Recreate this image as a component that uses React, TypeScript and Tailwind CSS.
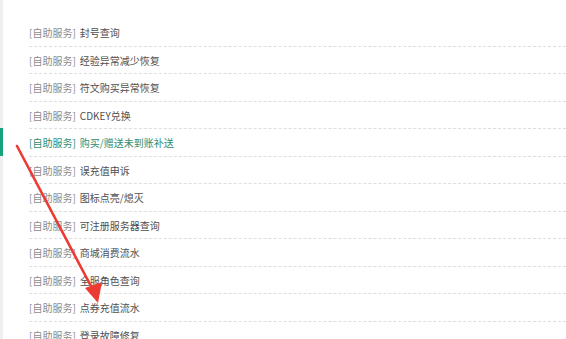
const items = [
  { title: "封号查询" },
  { title: "经验异常减少恢复" },
  { title: "符文购买异常恢复" },
  { title: "CDKEY兑换" },
  { title: "购买/赠送未到账补送", active: true },
  { title: "误充值申诉" },
  { title: "图标点亮/熄灭" },
  { title: "可注册服务器查询" },
  { title: "商城消费流水" },
  { title: "全服角色查询" },
  { title: "点券充值流水" },
  { title: "登录故障修复" },
]

const Row = ({ title, active }: { title: string; active?: boolean }) => (
  <li className="relative h-[27.5px] pt-[2px] border-b border-dashed border-[#dedede] flex items-center">
    {active && <span className="absolute -left-[29px] top-[-1px] h-[28px] w-[3px] bg-[#16a37c]" />}
    <span className={active ? "text-[#2f8d70]" : "text-[#8c8c8c]"}>[自助服务]</span>
    <span className={`ml-[4px] ${active ? "text-[#2f8d70]" : "text-[#505050]"}`}>{title}</span>
  </li>
)

export default function App() {
  return (
    <div
      className="relative w-[566px] h-[339px] overflow-hidden bg-white"
      style={{ fontFamily: '"Noto Sans CJK SC", "Noto Sans", sans-serif' }}
    >
      <div className="flex h-full">
        <div className="w-[3px] shrink-0 bg-[#efefef]" />
        <ul className="flex-1 ml-[26px] pt-[19px] text-[10px] leading-none">
          {items.map((it) => (
            <Row key={it.title} title={it.title} active={it.active} />
          ))}
        </ul>
      </div>

      {/* annotation arrow */}
      <svg className="absolute left-0 top-0 pointer-events-none" width="566" height="339">
        <line x1="17" y1="146" x2="93" y2="290" stroke="#ec3b32" strokeWidth="2.6" strokeLinecap="round" />
        <polygon points="98,303 85,288 102,282" fill="#ec3b32" />
      </svg>
    </div>
  )
}
